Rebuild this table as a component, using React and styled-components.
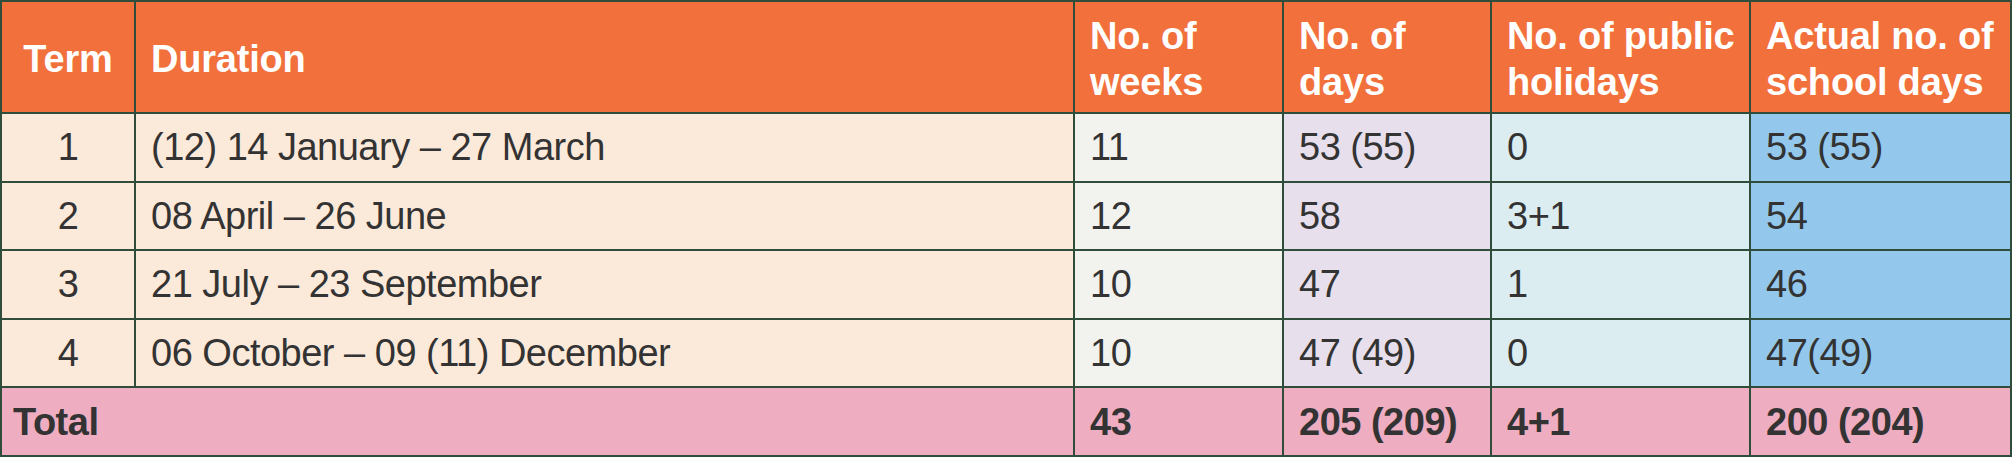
import styled, { createGlobalStyle } from 'styled-components';

const GlobalStyle = createGlobalStyle`
  html, body {
    margin: 0;
    padding: 0;
    background: #ffffff;
  }
  body {
    font-family: 'Liberation Sans', Arial, sans-serif;
  }
`;

const tones = {
  head: '#f1703b',
  term: '#fbe9da',
  weeks: '#f2f2ef',
  days: '#e7dfec',
  holidays: '#dbedf1',
  actual: '#93c8ec',
  total: '#eeadc1',
};

const Table = styled.div`
  display: grid;
  grid-template-columns: 132px 937px 207px 206px 257px 259px;
  grid-template-rows: 110px repeat(5, 66.6px);
  gap: 2px;
  padding: 2px;
  width: 2012px;
  box-sizing: border-box;
  background: #2f4d3a;
`;

const Cell = styled.div`
  display: flex;
  align-items: center;
  justify-content: ${(p) => (p.center ? 'center' : 'flex-start')};
  padding: ${(p) => (p.center ? '0' : '0 0 0 15px')};
  background: ${(p) => tones[p.tone]};
  color: #333333;
  font-size: 38px;
  letter-spacing: -0.5px;
  line-height: 46px;
  white-space: nowrap;
  overflow: hidden;
`;

const HeadCell = styled(Cell)`
  color: #ffffff;
  font-weight: bold;
  letter-spacing: -0.2px;
  padding-top: 4px;
`;

const TotalCell = styled(Cell)`
  font-weight: bold;
  grid-column: ${(p) => p.span || 'auto'};
  padding-left: ${(p) => (p.span ? '11px' : '15px')};
`;

const rows = [
  ['1', '(12) 14 January – 27 March', '11', '53 (55)', '0', '53 (55)'],
  ['2', '08 April – 26 June', '12', '58', '3+1', '54'],
  ['3', '21 July – 23 September', '10', '47', '1', '46'],
  ['4', '06 October – 09 (11) December', '10', '47 (49)', '0', '47(49)'],
];

export default function App() {
  return (
    <>
      <GlobalStyle />
      <Table>
        <HeadCell tone="head" center>Term</HeadCell>
        <HeadCell tone="head">Duration</HeadCell>
        <HeadCell tone="head">No. of<br />weeks</HeadCell>
        <HeadCell tone="head">No. of<br />days</HeadCell>
        <HeadCell tone="head">No. of public<br />holidays</HeadCell>
        <HeadCell tone="head">Actual no. of<br />school days</HeadCell>

        {rows.map((r) => [
          <Cell key={r[0] + 'a'} tone="term" center>{r[0]}</Cell>,
          <Cell key={r[0] + 'b'} tone="term">{r[1]}</Cell>,
          <Cell key={r[0] + 'c'} tone="weeks">{r[2]}</Cell>,
          <Cell key={r[0] + 'd'} tone="days">{r[3]}</Cell>,
          <Cell key={r[0] + 'e'} tone="holidays">{r[4]}</Cell>,
          <Cell key={r[0] + 'f'} tone="actual">{r[5]}</Cell>,
        ])}

        <TotalCell tone="total" span="span 2">Total</TotalCell>
        <TotalCell tone="total">43</TotalCell>
        <TotalCell tone="total">205 (209)</TotalCell>
        <TotalCell tone="total">4+1</TotalCell>
        <TotalCell tone="total">200 (204)</TotalCell>
      </Table>
    </>
  );
}
